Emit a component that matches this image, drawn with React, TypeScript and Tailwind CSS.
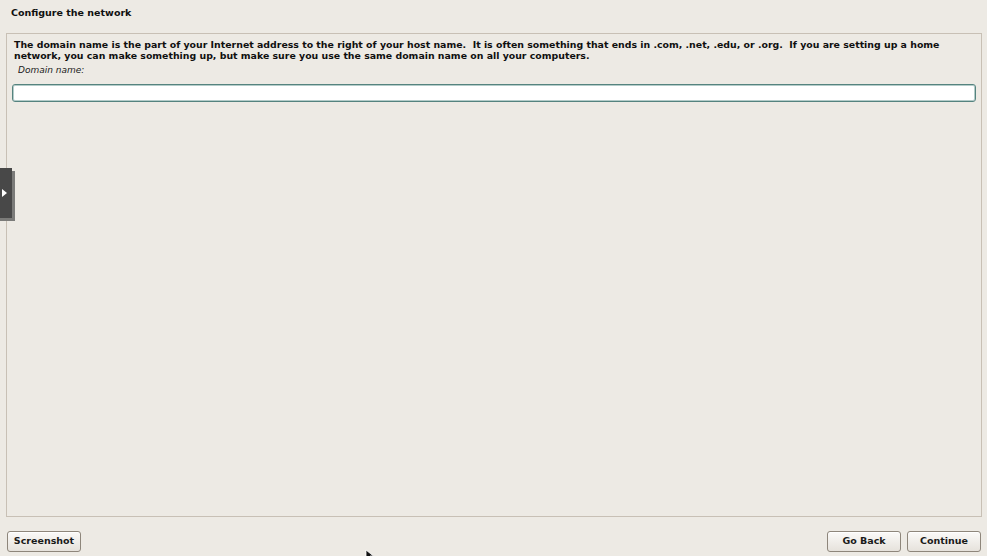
import React from "react";

// Installer step: domain name entry
function Button({ label }: { label: string }) {
  return (
    <button className="h-[21px] w-[74px] rounded-[3px] border border-[#8e867b] bg-gradient-to-b from-[#fbfaf8] to-[#e6e2dc] text-[9.5px] font-bold text-[#1a1a1a] shadow-[inset_0_1px_0_#ffffff]">
      {label}
    </button>
  );
}

export default function App() {
  return (
    <div
      className="relative flex h-[556px] w-[987px] flex-col overflow-hidden bg-[#edeae4] text-[#101010]"
      style={{ fontFamily: '"DejaVu Sans", Verdana, sans-serif' }}
    >
      <div className="h-[33px] px-[11px] pt-[7px] text-[9.5px] font-bold leading-[12px]">
        Configure the network
      </div>

      <div className="ml-[6px] mr-[5px] flex h-[484px] flex-col border border-[#c8c0b5] px-[5px] pt-[5px]">
        <p className="ml-[2px] whitespace-pre text-[9.4px] font-bold leading-[11px]">
          {"The domain name is the part of your Internet address to the right of your host name.  It is often something that ends in .com, .net, .edu, or .org.  If you are setting up a home\nnetwork, you can make something up, but make sure you use the same domain name on all your computers."}
        </p>
        <label className="ml-[6px] mt-[3px] text-[9px] italic leading-[12px] text-[#202020]">
          Domain name:
        </label>
        <input
          type="text"
          className="mt-[8px] h-[18px] w-full rounded-[3px] border border-[#55837f] bg-white px-1 text-[10px] shadow-[inset_0_0_0_1px_#b4ccc9] outline-none"
        />
      </div>

      <div className="flex items-center justify-between pl-[7px] pr-[6px] pt-[14px]">
        <Button label="Screenshot" />
        <div className="flex gap-[6px]">
          <Button label="Go Back" />
          <Button label="Continue" />
        </div>
      </div>

      {/* collapsed side tab */}
      <div className="absolute left-0 top-[171px] h-[50px] w-[15px] bg-[#7b7b79]" />
      <div className="absolute left-0 top-[168px] flex h-[50px] w-[12px] items-center bg-[#484848]">
        <svg width="6" height="8" viewBox="0 0 6 8" className="ml-[2px]">
          <path d="M0 0 L5 4 L0 8 Z" fill="#ffffff" />
        </svg>
      </div>

      {/* pointer */}
      <svg className="absolute left-[365px] top-[549px]" width="10" height="12" viewBox="0 0 10 12">
        <path d="M1 1 L1 10 L3.5 7.5 L5.5 11 L7 10.2 L5 7 L8.5 7 Z" fill="#111" stroke="#fff" strokeWidth="0.8" />
      </svg>
    </div>
  );
}
